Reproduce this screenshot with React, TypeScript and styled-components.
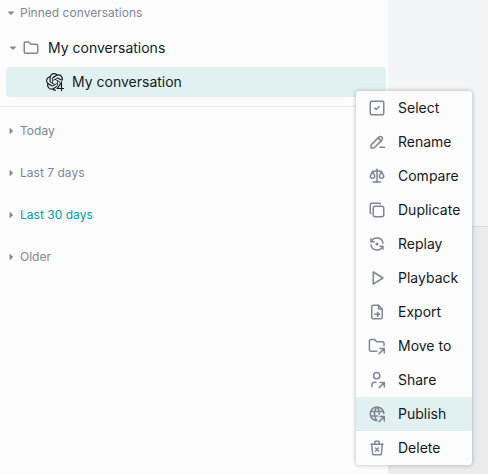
import React from 'react';
import type { ReactNode } from 'react';
import styled, { createGlobalStyle } from 'styled-components';
import {
  TbSquareCheck,
  TbPencilMinus,
  TbScale,
  TbCopy,
  TbRefreshDot,
  TbPlayerPlay,
  TbFileArrowRight,
  TbTrashX,
  TbFolder,
} from 'react-icons/tb';
import { SiOpenai } from 'react-icons/si';

const GlobalStyle = createGlobalStyle`
  *, *::before, *::after { box-sizing: border-box; }
  body {
    margin: 0;
    overflow: hidden;
    font-family: Inter, "Liberation Sans", sans-serif;
    color: #141a23;
  }
`;

const Page = styled.div`
  position: relative;
  display: flex;
  width: 488px;
  height: 474px;
  overflow: hidden;
`;

const Sidebar = styled.aside`
  width: 388px;
  flex: none;
  background: #fcfcfc;
`;

const Main = styled.main`
  flex: 1;
  display: flex;
  flex-direction: column;
  background: #f3f4f6;
`;

const Composer = styled.div`
  margin-top: 226px;
  flex: 1;
  border-top: 1px solid #d5dbe3;
  background: #e8ecef;
`;

const Pinned = styled.section`
  height: 107px;
  border-bottom: 1px solid #e9eaec;
`;

const SectionTitle = styled.div<{ $active?: boolean; $height: number }>`
  display: flex;
  align-items: center;
  gap: 4px;
  height: ${(p) => p.$height}px;
  padding-left: 6px;
  font-size: 12px;
  line-height: 16px;
  letter-spacing: 0.02px;
  color: ${(p) => (p.$active ? '#009d9f' : '#7f8792')};
`;

const Caret = styled.svg`
  width: 10px;
  height: 10px;
  flex: none;
  fill: #7f8792;
`;

const Label = styled.span`
  font-size: 14px;
  line-height: 18px;
  white-space: nowrap;
`;

const TreeRow = styled.div`
  display: flex;
  align-items: center;
  height: 34px;
  margin-top: 5px;
  padding-left: 8px;
`;

const FolderIcon = styled(TbFolder)`
  margin: 0 8px 0 4px;
  color: #7f8792;
`;

const ConversationRow = styled.div`
  display: flex;
  align-items: center;
  gap: 8px;
  height: 30px;
  margin: 2px 2px 0 6px;
  padding-left: 40px;
  border-radius: 3px;
  background: #e1f1f1;
`;

const Groups = styled.nav`
  padding-top: 3px;
`;

const Menu = styled.div`
  position: absolute;
  left: 356px;
  top: 91px;
  width: 116px;
  border-radius: 3px;
  overflow: hidden;
  background: #fcfcfc;
  box-shadow: 0 0 4px rgba(9, 13, 19, 0.3);
`;

const MenuItem = styled.div<{ $active?: boolean }>`
  display: flex;
  align-items: center;
  gap: 12px;
  height: 34px;
  padding: 0 12px;
  background: ${(p) => (p.$active ? '#e1f1f1' : 'transparent')};

  svg {
    flex: none;
    color: #7f8792;
  }
`;

const CaretDown = () => (
  <Caret viewBox="0 0 10 10"><path d="M2 3.4h6v.6L5 6.9 2 4z" /></Caret>
);

const CaretRight = () => (
  <Caret viewBox="0 0 10 10"><path d="M3.6 2v6h.6L7 5 4.2 2z" /></Caret>
);

const LineIcon = ({ children }: { children: ReactNode }) => (
  <svg width="18" height="18" viewBox="0 0 18 18" fill="none" stroke="currentColor"
    strokeWidth="1.5" strokeLinecap="round" strokeLinejoin="round">
    {children}
  </svg>
);

const CornerArrow = () => <path d="M11.2 16.6l4.8-4.8M12 11.6h4.3v4.3" />;

const MoveIcon = () => (
  <LineIcon>
    <path d="M8.7 14.2H3a1.6 1.6 0 0 1-1.6-1.6V4A1.6 1.6 0 0 1 3 2.4h3.3l2.5 2.4h5.6A1.6 1.6 0 0 1 16 6.4v2.4" />
    <CornerArrow />
  </LineIcon>
);

const ShareIcon = () => (
  <LineIcon>
    <circle cx="8.7" cy="4.7" r="3.1" />
    <path d="M3.9 15.8v-1.5a3 3 0 0 1 3-3H8" />
    <CornerArrow />
  </LineIcon>
);

const PublishIcon = () => (
  <LineIcon>
    <path d="M9 15.6A6.8 6.8 0 1 1 15.8 8.6M2.7 6.5h12.6M2.7 11.1h6.9M8.6 2a12.8 12.8 0 0 0 0 13.6M9.4 2a12.7 12.7 0 0 1 1.9 7.3" />
    <CornerArrow />
  </LineIcon>
);

const ModelIcon = () => (
  <svg width="18" height="18" viewBox="0 0 18 18">
    <SiOpenai size={18} color="#141a23" />
    <path d="M15.5 8.4 10.6 15.5V18H18V8.4z" fill="#e1f1f1" stroke="#e1f1f1" strokeWidth="1.6" />
    <path d="M15.5 18V9.4L11.3 15.5H18" fill="none" stroke="#141a23" strokeWidth="1.2" />
  </svg>
);

const menuItems: { label: string; icon: ReactNode }[] = [
  { label: 'Select', icon: <TbSquareCheck size={18} /> },
  { label: 'Rename', icon: <TbPencilMinus size={18} /> },
  { label: 'Compare', icon: <TbScale size={18} /> },
  { label: 'Duplicate', icon: <TbCopy size={18} /> },
  { label: 'Replay', icon: <TbRefreshDot size={18} /> },
  { label: 'Playback', icon: <TbPlayerPlay size={18} /> },
  { label: 'Export', icon: <TbFileArrowRight size={18} /> },
  { label: 'Move to', icon: <MoveIcon /> },
  { label: 'Share', icon: <ShareIcon /> },
  { label: 'Publish', icon: <PublishIcon /> },
  { label: 'Delete', icon: <TbTrashX size={18} /> },
];

const groups = ['Today', 'Last 7 days', 'Last 30 days', 'Older'];

export default function App() {
  return (
    <>
      <GlobalStyle />
      <Page>
        <Sidebar>
          <Pinned>
            <SectionTitle $height={26}><CaretDown />Pinned conversations</SectionTitle>
            <TreeRow><CaretDown /><FolderIcon size={18} /><Label>My conversations</Label></TreeRow>
            <ConversationRow><ModelIcon /><Label>My conversation</Label></ConversationRow>
          </Pinned>
          <Groups>
            {groups.map((label) => (
              <SectionTitle key={label} $height={42} $active={label === 'Last 30 days'}>
                <CaretRight />{label}
              </SectionTitle>
            ))}
          </Groups>
        </Sidebar>
        <Main><Composer /></Main>
        <Menu>
          {menuItems.map(({ label, icon }) => (
            <MenuItem key={label} $active={label === 'Publish'}>{icon}<Label>{label}</Label></MenuItem>
          ))}
        </Menu>
      </Page>
    </>
  );
}
